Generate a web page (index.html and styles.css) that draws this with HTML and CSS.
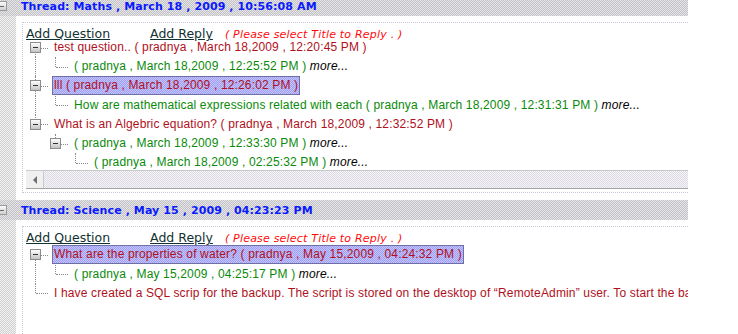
FILE: index.html
```html
<!DOCTYPE html>
<html lang="en">
<head>
    <meta charset="UTF-8">
    <title>Discussion Threads</title>
    <link rel="stylesheet" href="styles.css">
</head>
<body>
    <div class="page">

        <div class="thread first">
            <div class="thread-head">
                <span class="head-toggle"></span>
                <span class="head-title">Thread: Maths , March 18 , 2009 , 10:56:08 AM</span>
            </div>
            <div class="thread-body">
                <div class="gutter"></div>
                <div class="panel">
                    <div class="box">
                        <div class="actions">
                            <a href="#" class="action">Add Question</a>
                            <a href="#" class="action reply">Add Reply</a>
                            <span class="hint">( Please select Title to Reply . )</span>
                        </div>
                        <div class="tree">
                            <div class="row">
                                <span class="cell top-minus"><i class="minus"></i></span>
                                <span class="node red">test question.. ( pradnya , March 18,2009 , 12:20:45 PM )</span>
                            </div>
                            <div class="row">
                                <span class="cell line"></span>
                                <span class="cell elbow"></span>
                                <span class="node green">( pradnya , March 18,2009 , 12:25:52 PM ) <em>more...</em></span>
                            </div>
                            <div class="row">
                                <span class="cell tee"><i class="minus"></i></span>
                                <span class="node red selected">lll ( pradnya , March 18,2009 , 12:26:02 PM )</span>
                            </div>
                            <div class="row">
                                <span class="cell line"></span>
                                <span class="cell elbow"></span>
                                <span class="node green">How are mathematical expressions related with each ( pradnya , March 18,2009 , 12:31:31 PM ) <em>more...</em></span>
                            </div>
                            <div class="row">
                                <span class="cell last"><i class="minus"></i></span>
                                <span class="node red">What is an Algebric equation? ( pradnya , March 18,2009 , 12:32:52 PM )</span>
                            </div>
                            <div class="row">
                                <span class="cell"></span>
                                <span class="cell last"><i class="minus"></i></span>
                                <span class="node green">( pradnya , March 18,2009 , 12:33:30 PM ) <em>more...</em></span>
                            </div>
                            <div class="row">
                                <span class="cell"></span>
                                <span class="cell"></span>
                                <span class="cell elbow"></span>
                                <span class="node green">( pradnya , March 18,2009 , 02:25:32 PM ) <em>more...</em></span>
                            </div>
                        </div>
                        <div class="hscroll">
                            <span class="arrow-btn"><i class="arrow-left"></i></span>
                            <span class="track"></span>
                        </div>
                    </div>
                </div>
            </div>
        </div>

        <div class="thread">
            <div class="thread-head">
                <span class="head-toggle"></span>
                <span class="head-title">Thread: Science , May 15 , 2009 , 04:23:23 PM</span>
            </div>
            <div class="thread-body">
                <div class="gutter"></div>
                <div class="panel">
                    <div class="box open">
                        <div class="actions">
                            <a href="#" class="action">Add Question</a>
                            <a href="#" class="action reply">Add Reply</a>
                            <span class="hint">( Please select Title to Reply . )</span>
                        </div>
                        <div class="tree">
                            <div class="row">
                                <span class="cell top-minus"><i class="minus"></i></span>
                                <span class="node red selected">What are the properties of water? ( pradnya , May 15,2009 , 04:24:32 PM )</span>
                            </div>
                            <div class="row">
                                <span class="cell line"></span>
                                <span class="cell elbow"></span>
                                <span class="node green">( pradnya , May 15,2009 , 04:25:17 PM ) <em>more...</em></span>
                            </div>
                            <div class="row">
                                <span class="cell elbow"></span>
                                <span class="node red">I have created a SQL scrip for the backup. The script is stored on the desktop of &ldquo;RemoteAdmin&rdquo; user. To start the backup run the script from the command prompt.</span>
                            </div>
                        </div>
                    </div>
                </div>
            </div>
        </div>

    </div>
</body>
</html>
```

FILE: styles.css
```css
body {
    margin: 0;
    background-color: #fff;
    font-family: "Liberation Sans", Arial, sans-serif;
}

.page {
    width: 688px;
    height: 334px;
    overflow: hidden;
}

.thread-head {
    height: 20px;
    display: flex;
    align-items: center;
    background: repeating-conic-gradient(#c2c2c6 0 25%, #e6e6e8 0 50%) 0 0 / 2px 2px;
}

.first .thread-head {
    margin-top: -4px;
}

.head-toggle {
    width: 9px;
    height: 8px;
    margin-left: -4px;
    border: 1px solid #9a9a9a;
    background: linear-gradient(#fafafa, #cfcfcf);
    position: relative;
}

.head-toggle::after {
    content: "";
    position: absolute;
    left: 2px;
    right: 2px;
    top: 4px;
    height: 1px;
    background-color: #666;
}

.head-title {
    margin-left: 14px;
    font-family: "DejaVu Sans", sans-serif;
    font-weight: bold;
    font-size: 11px;
    letter-spacing: 0.1px;
    color: #0a1aff;
}

.thread-body {
    display: flex;
}

.gutter {
    width: 16px;
    flex: none;
    background: repeating-conic-gradient(#cfcfcf 0 25%, #f2f2f2 0 50%) 0 0 / 2px 2px;
}

.panel {
    flex: 1;
    min-width: 0;
    padding: 6px 0 7px 6px;
}

.box {
    border: 1px dotted #c8c8d8;
    border-right: none;
    padding: 4px 0 3px 3px;
}

.box.open {
    border-bottom: none;
    height: 120px;
    padding-top: 4px;
}

.actions {
    display: flex;
    align-items: baseline;
    height: 11px;
    line-height: 14px;
    white-space: nowrap;
}

.open .actions {
    height: 14px;
}

.action {
    font-family: "DejaVu Sans", sans-serif;
    font-size: 12.5px;
    color: #123232;
    text-decoration: underline;
}

.reply {
    margin-left: 40px;
}

.hint {
    margin-left: 12px;
    font-family: "DejaVu Sans", sans-serif;
    font-style: italic;
    font-size: 11px;
    letter-spacing: 0.2px;
    color: #ff0a0a;
}

.tree {
    white-space: nowrap;
    font-size: 12px;
    letter-spacing: 0.15px;
}

.row {
    display: flex;
    height: 19.2px;
    align-items: stretch;
}

.cell {
    width: 20px;
    flex: none;
    position: relative;
}

.cell.line::before,
.cell.tee::before,
.cell.elbow::before,
.cell.last::before,
.cell.top-minus::before {
    content: "";
    position: absolute;
    left: 9px;
    top: 0;
    bottom: 0;
    border-left: 1px dotted #8a8a8a;
}

.cell.elbow::before,
.cell.last::before {
    bottom: 50%;
}

.cell.top-minus::before {
    top: 50%;
}

.cell.tee::after,
.cell.elbow::after,
.cell.last::after,
.cell.top-minus::after {
    content: "";
    position: absolute;
    left: 10px;
    width: 12px;
    top: 50%;
    border-top: 1px dotted #8a8a8a;
}

.minus {
    position: absolute;
    left: 4px;
    top: 4px;
    width: 9px;
    height: 9px;
    border: 1px solid #8c8c8c;
    background: linear-gradient(#fdfdfd, #c4c4c4);
    z-index: 1;
}

.minus::after {
    content: "";
    position: absolute;
    left: 2px;
    right: 2px;
    top: 4px;
    height: 1px;
    background-color: #333;
}

.node {
    margin-left: 7px;
    padding: 1px 1px;
    align-self: center;
    line-height: 15px;
}

.red {
    color: #b0101c;
}

.green {
    color: #0a8a0a;
}

.node em {
    color: #000;
}

.selected {
    margin-left: 6px;
    border: 1px solid #6f6fa8;
    background: repeating-conic-gradient(#9f9ff2 0 25%, #c4c4ff 0 50%) 0 0 / 2px 2px;
}

.hscroll {
    display: flex;
    height: 17px;
    margin-top: -2px;
    border-top: 1px solid #c9c9c9;
    border-bottom: 1px solid #a4a4a4;
}

.arrow-btn {
    width: 17px;
    flex: none;
    display: flex;
    align-items: center;
    justify-content: center;
    border-right: 1px solid #c9c9c9;
    background-color: #f0f0f0;
}

.arrow-left {
    width: 0;
    height: 0;
    border-top: 4px solid transparent;
    border-bottom: 4px solid transparent;
    border-right: 4px solid #6e6e6e;
}

.track {
    flex: 1;
    background: repeating-conic-gradient(#dcd8e4 0 25%, #f6f6f8 0 50%) 0 0 / 2px 2px;
}
```
